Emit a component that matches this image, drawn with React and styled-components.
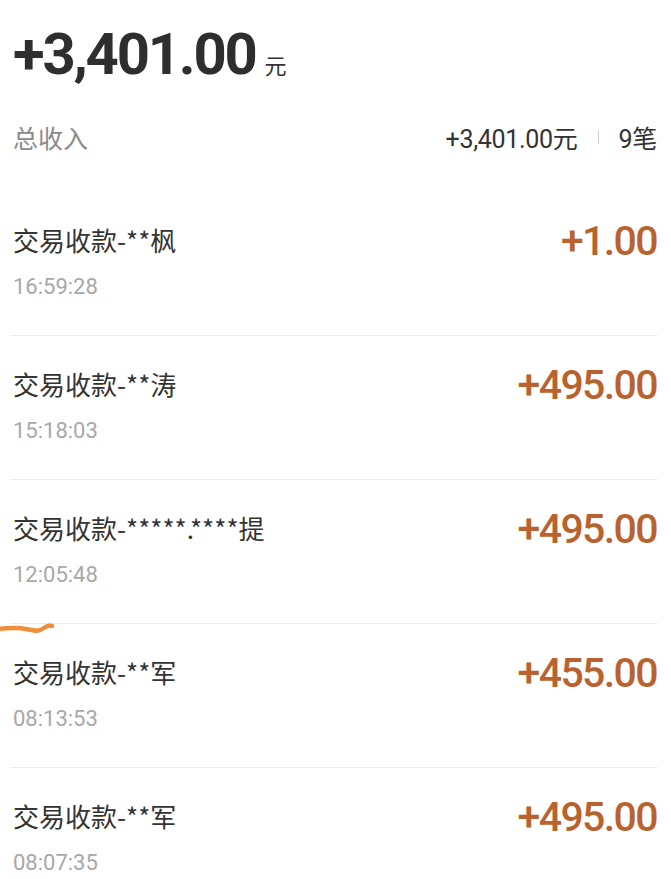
import styled, { createGlobalStyle } from "styled-components";

const GlobalStyle = createGlobalStyle`
  body {
    margin: 0;
    background: #ffffff;
    font-family: Roboto, "Noto Sans CJK SC", sans-serif;
    color: #333333;
  }
`;

const records = [
  { id: 1, name: "交易收款-**枫", time: "16:59:28", amount: "+1.00" },
  { id: 2, name: "交易收款-**涛", time: "15:18:03", amount: "+495.00" },
  { id: 3, name: "交易收款-*****.****提", time: "12:05:48", amount: "+495.00" },
  { id: 4, name: "交易收款-**军", time: "08:13:53", amount: "+455.00" },
  { id: 5, name: "交易收款-**军", time: "08:07:35", amount: "+495.00" },
];

const App = () => {
  return (
    <Page>
      <GlobalStyle />
      <TotalLine>
        <TotalAmount>+3,401.00</TotalAmount>
        <TotalUnit>元</TotalUnit>
      </TotalLine>
      <SummaryRow>
        <SummaryLabel>总收入</SummaryLabel>
        <SummaryRight>
          <span>+3,401.00元</span>
          <SummaryDivider />
          <span>9笔</span>
        </SummaryRight>
      </SummaryRow>
      <List>
        {records.map((el, i) => {
          return (
            <Item key={el.id} first={i === 0}>
              <ItemInfo>
                <ItemTitle>{el.name}</ItemTitle>
                <ItemTime>{el.time}</ItemTime>
              </ItemInfo>
              <ItemAmount>{el.amount}</ItemAmount>
            </Item>
          );
        })}
      </List>
      <PenMark width="56" height="16" viewBox="0 0 56 16">
        <path
          d="M-2 9 C 8 8, 16 7, 26 9 S 38 12, 44 8 S 50 6, 52 6"
          fill="none"
          stroke="#ef8f3c"
          strokeWidth="4.5"
          strokeLinecap="round"
        />
      </PenMark>
    </Page>
  );
};

export default App;

const Page = styled.div`
  position: relative;
  width: 671px;
  height: 879px;
  overflow: hidden;
  box-sizing: border-box;
  padding: 25px 14px 0 10px;
`;

const TotalLine = styled.div`
  display: flex;
  align-items: baseline;
  padding-left: 3px;
  gap: 9px;
`;

const TotalAmount = styled.span`
  font-family: Roboto, sans-serif;
  font-size: 58px;
  line-height: 58px;
  font-weight: 700;
  letter-spacing: -2.2px;
  color: #2e2e2e;
`;

const TotalUnit = styled.span`
  font-family: "Noto Sans CJK SC", sans-serif;
  font-size: 22px;
  color: #333333;
`;

const SummaryRow = styled.div`
  display: flex;
  justify-content: space-between;
  align-items: center;
  height: 40px;
  margin-top: 34px;
  padding-left: 3px;
`;

const SummaryLabel = styled.span`
  font-family: "Noto Sans CJK SC", sans-serif;
  font-size: 25px;
  color: #8a8a8a;
`;

const SummaryRight = styled.div`
  display: flex;
  align-items: center;
  font-family: Roboto, "Noto Sans CJK SC", sans-serif;
  font-size: 25px;
  color: #333333;
  letter-spacing: -0.3px;
`;

const SummaryDivider = styled.span`
  display: block;
  width: 1px;
  height: 14px;
  background: #cfcfcf;
  margin: 0 20px;
`;

const List = styled.div`
  display: flex;
  flex-direction: column;
  margin-top: 34px;
`;

const Item = styled.div`
  display: flex;
  justify-content: space-between;
  align-items: flex-start;
  height: 144px;
  box-sizing: border-box;
  border-top: 1px solid ${(p) => (p.first ? "transparent" : "#ececec")};
`;

const ItemInfo = styled.div`
  display: flex;
  flex-direction: column;
  gap: 14px;
  padding: 30px 0 0 3px;
`;

const ItemTitle = styled.div`
  font-family: "Noto Sans CJK SC", sans-serif;
  font-size: 26px;
  line-height: 36px;
  color: #333333;
`;

const ItemTime = styled.div`
  font-family: Roboto, sans-serif;
  font-size: 22px;
  line-height: 30px;
  color: #a8a8a8;
`;

const ItemAmount = styled.div`
  font-family: Roboto, sans-serif;
  font-size: 41px;
  line-height: 44px;
  font-weight: 500;
  letter-spacing: -1.6px;
  color: #b9622f;
  padding-top: 27px;
`;

const PenMark = styled.svg`
  position: absolute;
  left: 0;
  top: 620px;
`;
